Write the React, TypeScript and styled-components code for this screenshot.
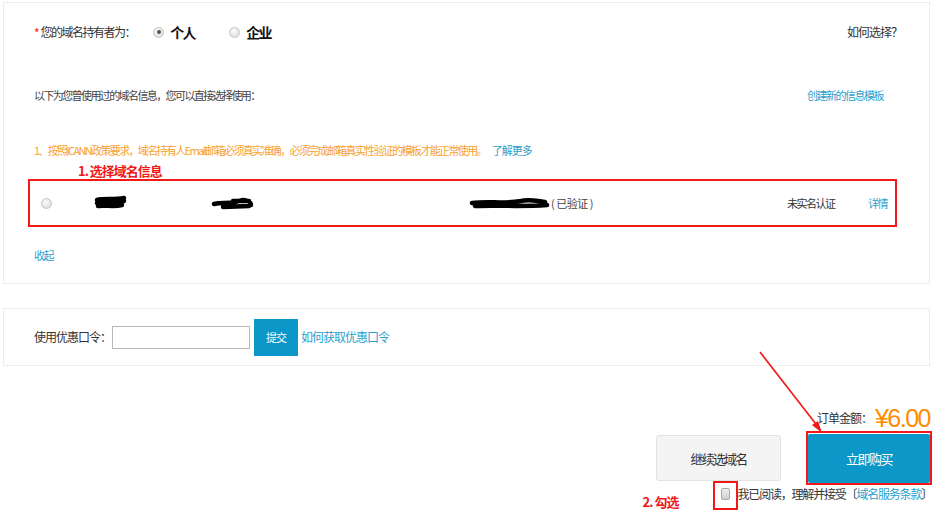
import React from "react";
import styled, { createGlobalStyle } from "styled-components";

const GlobalStyle = createGlobalStyle`
  html, body { margin: 0; padding: 0; background: #fff; }
  body { font-family: "Noto Sans CJK SC", "Noto Sans", sans-serif; color: #333; }
`;

const BLUE = "#2b9fce";
const RED = "#f01818";

const Page = styled.div`
  position: relative;
  width: 952px;
  height: 520px;
  overflow: hidden;
`;

const Panel = styled.div<{ $h: number; $mt: number }>`
  box-sizing: border-box;
  margin: ${(p) => p.$mt}px 0 0 3px;
  width: 927px;
  height: ${(p) => p.$h}px;
  border: 1px solid #ececec;
`;

const InfoPanel = styled(Panel)`
  padding: 19px 0 0 30px;
`;

const Txt = styled.span<{ $size?: number; $ls?: number; $color?: string; $bold?: boolean }>`
  font-size: ${(p) => p.$size ?? 11}px;
  letter-spacing: ${(p) => p.$ls ?? -1.5}px;
  color: ${(p) => p.$color ?? "#333"};
  font-weight: ${(p) => (p.$bold ? 700 : 400)};
  white-space: nowrap;
  line-height: 1;
`;

const OwnerRow = styled.div`
  display: flex;
  align-items: center;
  height: 20px;
  padding-right: 27px;
`;

const Star = styled.span`
  color: ${RED};
  font-size: 12px;
  margin-right: 1px;
`;

const RadioOption = styled.label<{ $ml: number }>`
  display: flex;
  align-items: center;
  margin-left: ${(p) => p.$ml}px;
  gap: 6px;
`;

const Radio = styled.span<{ $checked?: boolean }>`
  position: relative;
  display: inline-block;
  box-sizing: border-box;
  width: 11px;
  height: 11px;
  border-radius: 50%;
  border: 1px solid #c4c4c4;
  background: radial-gradient(circle at 40% 35%, #fafafa, #d8d8d8);
  &::after {
    content: "";
    display: ${(p) => (p.$checked ? "block" : "none")};
    position: absolute;
    left: 2.5px;
    top: 2.5px;
    width: 4px;
    height: 4px;
    border-radius: 50%;
    background: #555;
  }
`;

const Spacer = styled.div`
  flex: 1;
`;

const HintRow = styled.div`
  display: flex;
  align-items: center;
  justify-content: space-between;
  height: 18px;
  margin-top: 44px;
  padding-right: 46px;
`;

const NoticeRow = styled.div`
  display: flex;
  align-items: center;
  height: 18px;
  margin-top: 37px;
  gap: 6px;
`;

const RecordRow = styled.div`
  position: relative;
  box-sizing: border-box;
  margin: 20px 0 0 -6px;
  width: 869px;
  height: 48px;
  border: 2px solid ${RED};
  display: grid;
  grid-template-columns: 64px 117px 258px 318px 81px auto;
  align-items: center;
`;

const Annotation = styled.span<{ $left: number; $top: number }>`
  position: absolute;
  left: ${(p) => p.$left}px;
  top: ${(p) => p.$top}px;
  color: ${RED};
  font-size: 13px;
  font-weight: 700;
  letter-spacing: -1px;
  white-space: nowrap;
  line-height: 1;
`;

const RadioCell = styled.div`
  padding-left: 11px;
  display: flex;
  align-items: center;
`;

const Cell = styled.div`
  display: flex;
  align-items: center;
`;

const CollapseRow = styled.div`
  margin-top: 19px;
  height: 18px;
  display: flex;
  align-items: center;
`;

const CouponPanel = styled(Panel)`
  display: flex;
  align-items: center;
  padding-left: 30px;
`;

const CodeInput = styled.input`
  box-sizing: border-box;
  width: 138px;
  height: 23px;
  margin-left: 1px;
  border: 1px solid #b8b8b8;
  padding: 0 4px;
  outline: none;
`;

const SubmitButton = styled.button`
  width: 44px;
  height: 37px;
  margin-left: 4px;
  border: 0;
  background: #0b97c8;
  color: #fff;
  font-family: inherit;
  font-size: 11px;
  letter-spacing: -1px;
  padding: 0;
`;

const CheckoutArea = styled.div`
  display: flex;
  flex-direction: column;
  align-items: flex-end;
  padding-right: 20px;
`;

const TotalRow = styled.div`
  display: flex;
  align-items: center;
  height: 26px;
  margin-top: 39px;
  margin-right: 2px;
`;

const Price = styled.span`
  font-family: "Liberation Sans", Arial, sans-serif;
  font-size: 25px;
  color: #ff8c00;
  letter-spacing: -1.5px;
  line-height: 1;
  margin-left: 3px;
`;

const ActionsRow = styled.div`
  display: flex;
  align-items: center;
`;

const ContinueButton = styled.button`
  box-sizing: border-box;
  width: 125px;
  height: 46px;
  margin-right: 25px;
  border: 1px solid #e2e2e2;
  border-radius: 3px;
  background: #f4f4f4;
  color: #333;
  font-family: inherit;
  font-size: 13px;
  letter-spacing: -1.8px;
  padding: 0;
`;

const BuyFrame = styled.div`
  box-sizing: border-box;
  width: 126px;
  height: 54px;
  border: 2px solid ${RED};
  padding: 1px 0 0 0;
  display: flex;
  justify-content: center;
`;

const BuyButton = styled.button`
  width: 122px;
  height: 49px;
  border: 0;
  border-radius: 2px;
  background: #0b97c8;
  color: #fff;
  font-family: inherit;
  font-size: 13px;
  letter-spacing: -1.5px;
  padding: 0;
`;

const AgreeRow = styled.div`
  display: flex;
  align-items: center;
  height: 18px;
  margin-right: 0;
`;

const CheckWrap = styled.span`
  position: relative;
  width: 25px;
  height: 18px;
  display: flex;
  align-items: center;
  justify-content: center;
`;

const CheckFrame = styled.span`
  position: absolute;
  left: 0;
  top: -4px;
  box-sizing: border-box;
  width: 25px;
  height: 29px;
  border: 2px solid ${RED};
`;

const CheckBox = styled.span`
  display: inline-block;
  box-sizing: border-box;
  width: 9px;
  height: 12px;
  border-radius: 2px;
  border: 1px solid #aaa;
  background: linear-gradient(#eee, #cfcfcf);
`;

const ArrowSvg = styled.svg`
  position: absolute;
  left: 0;
  top: 0;
  pointer-events: none;
`;

const Scribble: React.FC<{ w: number; d: string }> = ({ w, d }) => (
  <svg width={w} height={18} viewBox={`0 0 ${w} 18`}>
    <path d={d} fill="none" stroke="#000" strokeWidth={4.5} strokeLinecap="round" strokeLinejoin="round" />
  </svg>
);

export default function App() {
  return (
    <>
      <GlobalStyle />
      <Page>
        <InfoPanel $h={282} $mt={2}>
          <OwnerRow>
            <Star>*</Star>
            <Txt $size={12} $color="#333">您的域名持有者为：</Txt>
            <RadioOption $ml={18}>
              <Radio $checked />
              <Txt $size={14} $ls={-1.5} $bold $color="#111">个人</Txt>
            </RadioOption>
            <RadioOption $ml={34}>
              <Radio />
              <Txt $size={14} $ls={-1.5} $bold $color="#111">企业</Txt>
            </RadioOption>
            <Spacer />
            <Txt $size={12} $ls={-1} $color="#333">如何选择？</Txt>
          </OwnerRow>

          <HintRow>
            <Txt $size={11} $ls={-1.6} $color="#444">以下为您曾使用过的域名信息，您可以直接选择使用：</Txt>
            <Txt $size={11} $color={BLUE}>创建新的信息模板</Txt>
          </HintRow>

          <NoticeRow>
            <Txt $size={11} $ls={-1.65} $color="#f7a22e">
              1、按照ICANN政策要求，域名持有人Email邮箱必须真实准确，必须完成邮箱真实性验证的模板才能正常使用。
            </Txt>
            <Txt $size={11} $ls={-1} $color={BLUE}>了解更多</Txt>
          </NoticeRow>

          <RecordRow>
            <Annotation $left={48} $top={-17}>1. 选择域名信息</Annotation>
            <RadioCell>
              <Radio />
            </RadioCell>
            <Cell>
              <Scribble w={34} d="M3 6 C10 4 20 6 30 4 M3 9 C12 8 20 10 30 7 M4 12 C12 11 20 13 28 11" />
            </Cell>
            <Cell>
              <Scribble w={44} d="M3 10 C10 8 16 10 24 8 L32 6 C36 6 40 8 40 11 M12 13 L38 12 M22 7 L38 7" />
            </Cell>
            <Cell>
              <Scribble w={82} d="M3 9 C20 7 35 10 52 7 C60 5 68 7 76 8 M6 12 C30 11 50 13 78 11" />
              <Txt $size={11} $ls={-0.5} $color="#444">( 已验证 )</Txt>
            </Cell>
            <Cell>
              <Txt $size={11} $color="#333">未实名认证</Txt>
            </Cell>
            <Cell>
              <Txt $size={11} $color={BLUE}>详情</Txt>
            </Cell>
          </RecordRow>

          <CollapseRow>
            <Txt $size={11} $color={BLUE}>收起</Txt>
          </CollapseRow>
        </InfoPanel>

        <CouponPanel $h={58} $mt={24}>
          <Txt $size={12} $ls={-1} $color="#333">使用优惠口令：</Txt>
          <CodeInput />
          <SubmitButton>提交</SubmitButton>
          <Txt $size={12} $ls={-1} $color={BLUE} style={{ marginLeft: 3 }}>如何获取优惠口令</Txt>
        </CouponPanel>

        <CheckoutArea>
          <TotalRow>
            <Txt $size={12} $ls={-1} $color="#333">订单金额：</Txt>
            <Price>¥6.00</Price>
          </TotalRow>
          <ActionsRow>
            <ContinueButton>继续选域名</ContinueButton>
            <BuyFrame>
              <BuyButton>立即购买</BuyButton>
            </BuyFrame>
          </ActionsRow>
          <AgreeRow>
            <CheckWrap>
              <CheckFrame />
              <CheckBox />
              <Annotation $left={-70} $top={10}>2. 勾选</Annotation>
            </CheckWrap>
            <Txt $size={12} $ls={-1.2} $color="#333">
              我已阅读，理解并接受〔<Txt $size={12} $ls={-1.2} $color={BLUE}>域名服务条款</Txt>〕
            </Txt>
          </AgreeRow>
        </CheckoutArea>

        <ArrowSvg width={952} height={520}>
          <line x1={760} y1={352} x2={819} y2={428} stroke={RED} strokeWidth={1.6} />
          <path d="M822 433 L812 425 L818 421 Z" fill={RED} />
        </ArrowSvg>
      </Page>
    </>
  );
}
